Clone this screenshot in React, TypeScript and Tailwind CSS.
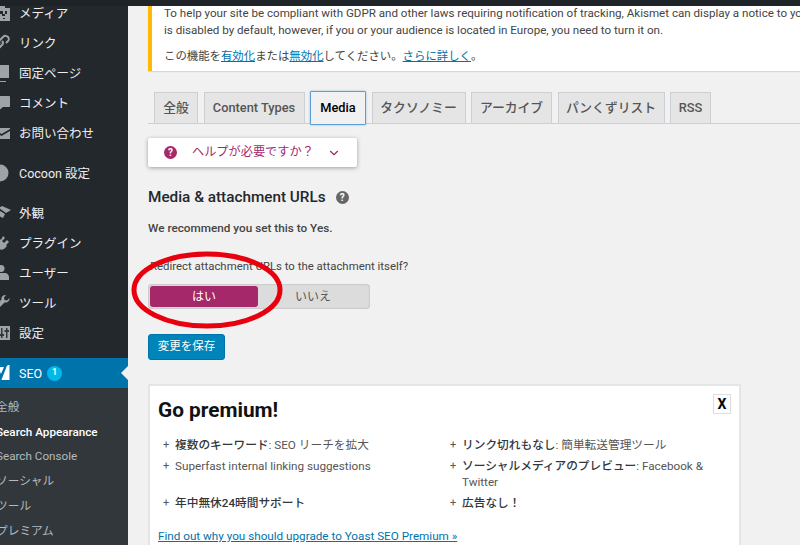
import { ChevronDown } from "lucide-react";
import type { ReactNode } from "react";

const iconClass = "w-5 h-5 -ml-[9px] shrink-0 fill-[#9ea3a8]";

const MediaIcon = () => (
    <svg viewBox="0 0 20 20" className={iconClass}>
        <path d="M9 2h5v3h5v6h-3V8h-2v3h-2V8H9z" />
        <path d="M9 11h2v2h3v-2h5v7H9zm3 4v1h2v-1z" />
        <path d="M1 5h7v12H1z" />
    </svg>
);
const LinkIcon = () => (
    <svg viewBox="0 0 20 20" className="w-5 h-5 -ml-[9px] shrink-0 fill-none stroke-[#9ea3a8] stroke-2">
        <path d="M9 11c-2-2-1-3 0-4l3-3c2-2 4-1 5 0s1 3 0 4l-2 2" />
        <path d="M11 8c2 2 1 3 0 4l-4 4c-2 2-4 1-5 0s-1-3 0-4l2-2" />
    </svg>
);
const PageIcon = () => (
    <svg viewBox="0 0 20 20" className={iconClass}>
        <path d="M5 2h13v13H5z" />
        <path d="M3 5v13h12v1H2V5z" />
    </svg>
);
const CommentIcon = () => (
    <svg viewBox="0 0 20 20" className={iconClass}>
        <path d="M3 3h15c.6 0 1 .4 1 1v9c0 .6-.4 1-1 1h-6l-5 4v-4H3z" />
    </svg>
);
const MailIcon = () => (
    <svg viewBox="0 0 20 20" className={iconClass}>
        <path d="M2 4h17v1l-8.5 5L2 5z" transform="translate(0 1)" />
        <path d="M2 8l8.500 5L19 8v8H2z" />
    </svg>
);
const CircleIcon = () => (
    <svg viewBox="0 0 20 20" className={iconClass}>
        <circle cx="9" cy="10" r="8.500" />
    </svg>
);
const BrushIcon = () => (
    <svg viewBox="0 0 20 20" className={iconClass}>
        <path d="M8 5l3-2 9 4-5 3z" />
        <path d="M6 6l8 5-2 4-4-2-6 3-2-2 4-5z" />
    </svg>
);
const PlugIcon = () => (
    <svg viewBox="0 0 20 20" className={iconClass}>
        <path d="M12 3l2 2-3 3 2 2 3-3 2 2-3 3 1 1-3 3c-2 1-4 1-5 0l-3 3-2-2 3-3c-1-1-1-3 0-5l3-3 1 1z" />
    </svg>
);
const UserIcon = () => (
    <svg viewBox="0 0 20 20" className={iconClass}>
        <circle cx="10" cy="5.500" r="3.500" />
        <path d="M2 17v-3c0-2 2-4 4-4h8c2 0 4 2 4 4v3z" />
    </svg>
);
const WrenchIcon = () => (
    <svg viewBox="0 0 20 20" className={iconClass}>
        <path d="M15 2c-3-.5-5 2-4.500 4.500L2 15c-1 1-1 2 0 3s2 1 3 0l8.500-8.500C16 10 19 8 18.500 5L16 7.500 13.500 7 13 4.500z" />
    </svg>
);
const SettingsIcon = () => (
    <svg viewBox="0 0 20 20" className="w-5 h-5 -ml-[9px] shrink-0">
        <path fill="#9ea3a8" d="M1 3h18v14H1z" />
        <path fill="#32373c" d="M5 5h1.500v3H8v2H6.500v5H5v-5H3.500V8H5zM10 5h1.500v6H13v2h-1.500v2H10v-2H8.500v-2H10zM15 5h1.500v2H18v2h-1.500v6H15V9h-1.500V7H15z" />
    </svg>
);
const YoastIcon = () => (
    <svg viewBox="0 0 20 20" className="w-5 h-5 -ml-[9px] shrink-0">
        <path fill="#ffffff" d="M2 4h13l2-2h1.500v15H7l-1 1-1-1h-1l-1-1z" />
        <path fill="#0073aa" d="M7.500 5.500L10 11l3-7h2.500L10 18H7.500l1-3L5 5.500z" />
    </svg>
);

const Row = ({ icon, label }: { icon: ReactNode; label: string }) => (
    <div className="h-[30px] flex items-center gap-2 text-[12.500px] text-[#eeeeee]">
        {icon}
        <span className="relative top-px">{label}</span>
    </div>
);

function Sidebar() {
    return (
        <aside className="w-[128px] shrink-0 bg-[#23282d] flex flex-col overflow-hidden">
            <div className="-mt-2">
                <Row icon={<MediaIcon />} label="メディア" />
                <Row icon={<LinkIcon />} label="リンク" />
                <Row icon={<PageIcon />} label="固定ページ" />
                <Row icon={<CommentIcon />} label="コメント" />
                <Row icon={<MailIcon />} label="お問い合わせ" />
            </div>
            <div className="mt-2.5">
                <Row icon={<CircleIcon />} label="Cocoon 設定" />
            </div>
            <div className="mt-2.5">
                <Row icon={<BrushIcon />} label="外観" />
                <Row icon={<PlugIcon />} label="プラグイン" />
                <Row icon={<UserIcon />} label="ユーザー" />
                <Row icon={<WrenchIcon />} label="ツール" />
                <Row icon={<SettingsIcon />} label="設定" />
            </div>
            <div className="mt-2.5 relative h-[30px] bg-[#0073aa] flex items-center gap-2 text-[12.500px] text-white">
                <YoastIcon />
                <span className="relative top-px">SEO</span>
                <span className="w-[15px] h-[15px] -ml-[3px] rounded-full bg-[#00b9eb] flex items-center justify-center text-[9px] font-semibold">1</span>
                <span className="absolute right-0 top-[8px] border-y-[7px] border-r-[7px] border-y-transparent border-r-[#f1f1f1]" />
            </div>
            <div className="flex-1 bg-[#32373c] pt-[7px] text-[11.700px] leading-[24.700px] text-[#b4b9be]">
                <div className="-ml-1">全般</div>
                <div className="-ml-1 font-medium text-white">Search Appearance</div>
                <div className="-ml-1">Search Console</div>
                <div className="-ml-1">ソーシャル</div>
                <div className="-ml-1">ツール</div>
                <div className="-ml-1">プレミアム</div>
            </div>
        </aside>
    );
}

const tabs = [
    { label: "全般", width: "w-[44px]" },
    { label: "Content Types", width: "w-[101px]" },
    { label: "Media", width: "w-[56px]", active: true },
    { label: "タクソノミー", width: "w-[94px]" },
    { label: "アーカイブ", width: "w-[81px]" },
    { label: "パンくずリスト", width: "w-[107px]" },
    { label: "RSS", width: "w-[41px]" },
];

function Tabs() {
    return (
        <div className="mt-[21px] h-[32px] pl-1.5 flex items-end gap-[5.500px] border-b border-[#ccd0d4]">
            {tabs.map((t) =>
                t.active ? (
                    <div
                        key={t.label}
                        className={`${t.width} h-[34px] -mb-[2px] flex items-center justify-center border border-[#5b9dd9] bg-[#f1f1f1] text-[12.800px] font-medium text-black rounded-[1px] shadow-[0_0_2px_rgba(30,140,190,0.5)]`}
                    >
                        {t.label}
                    </div>
                ) : (
                    <div
                        key={t.label}
                        className={`${t.width} h-[31px] flex items-center justify-center border border-b-0 border-[#ccd0d4] bg-[#e5e5e5] text-[12.800px] font-medium text-[#555555]`}
                    >
                        {t.label}
                    </div>
                )
            )}
        </div>
    );
}

const Plus = () => <span className="w-[12px] shrink-0 text-[#555555] text-[11px]">+</span>;

const Feature = ({ bold, rest }: { bold?: string; rest?: string }) => (
    <div className="flex pl-[5px] leading-[16.500px]">
        <Plus />
        <span>
            {bold && <b className="font-medium text-[#32373c]">{bold}</b>}
            {rest}
        </span>
    </div>
);

function Premium() {
    return (
        <div className="relative mt-[24px] w-[593px] flex-1 border-2 border-b-0 border-[#e5e5e5] bg-white pl-2 pr-2.5 pt-[10px] text-[11.700px] text-[#555555]">
            <div className="absolute right-2 top-2 w-[18px] h-[20px] border border-[#dddddd] flex items-center justify-center text-[14px] font-bold text-black">X</div>
            <h2 className="text-[20.800px] leading-[28px] font-bold text-[#111111]">Go premium!</h2>
            <div className="mt-[13px] grid grid-cols-[287px_262px] gap-y-[4px]">
                <Feature bold="複数のキーワード" rest=": SEO リーチを拡大" />
                <Feature bold="リンク切れもなし" rest=": 簡単転送管理ツール" />
                <Feature rest="Superfast internal linking suggestions" />
                <Feature bold="ソーシャルメディアのプレビュー" rest=": Facebook & Twitter" />
                <Feature bold="年中無休24時間サポート" />
                <Feature bold="広告なし！" />
            </div>
            <a className="block mt-[16px] text-[#0073aa] underline leading-[18px]">Find out why you should upgrade to Yoast SEO Premium »</a>
        </div>
    );
}

export default function App() {
    return (
        <div className="relative w-[800px] h-[545px] overflow-hidden flex flex-col bg-[#f1f1f1] font-['Roboto','Noto_Sans_CJK_JP',sans-serif]">
            <div className="h-1.5 shrink-0 bg-[#1d2327] relative z-10" />
            <div className="flex flex-1 min-h-0">
                <Sidebar />
                <main className="flex-1 min-w-0 pl-5 flex flex-col overflow-hidden">
                    <div className="h-[65px] shrink-0 -mr-10 border-l-4 border-[#ffb900] bg-white pl-3 text-[11.600px] leading-[16.500px] text-[#444444] shadow-[0_1px_1px_rgba(0,0,0,0.1)] whitespace-nowrap">
                        <p className="-mt-px">To help your site be compliant with GDPR and other laws requiring notification of tracking, Akismet can display a notice to you</p>
                        <p>is disabled by default, however, if you or your audience is located in Europe, you need to turn it on.</p>
                        <p className="mt-[10px] text-[11.400px]">
                            この機能を<a className="text-[#0073aa] underline">有効化</a>または<a className="text-[#0073aa] underline">無効化</a>してください。<a className="text-[#0073aa] underline">さらに詳しく</a>。
                        </p>
                    </div>
                    <Tabs />
                    <div className="mt-[14px] w-[209px] h-[29px] shrink-0 bg-white rounded-[2px] shadow-[0_1px_4px_rgba(0,0,0,0.35)] flex items-center pl-4 text-[12.200px] text-[#a4286a]">
                        <span className="w-[13px] h-[13px] rounded-full bg-[#a4286a] text-white text-[10px] font-bold flex items-center justify-center">?</span>
                        <span className="ml-[15px]">ヘルプが必要ですか？</span>
                        <ChevronDown className="w-3.5 h-3.5 ml-[13px]" strokeWidth={2} />
                    </div>
                    <div className="mt-[20px] flex items-center h-[20px]">
                        <h2 className="text-[15.300px] font-medium text-[#23282d]">Media &amp; attachment URLs</h2>
                        <span className="ml-[10px] w-[13px] h-[13px] rounded-full bg-[#666666] text-white text-[10px] font-bold flex items-center justify-center">?</span>
                    </div>
                    <p className="mt-[12px] text-[11.750px] leading-[18px] font-medium text-[#444444]">We recommend you set this to Yes.</p>
                    <p className="mt-[20px] ml-0.5 text-[11.400px] leading-[18px] text-[#444444]">Redirect attachment URLs to the attachment itself?</p>
                    <div className="mt-[9px] w-[222px] h-[25px] shrink-0 rounded-[4px] bg-[#dcdcdc] p-0.5 flex items-center text-[12px] shadow-[inset_0_0_2px_rgba(0,0,0,0.25)]">
                        <span className="w-[108px] h-[21px] rounded-[3px] bg-[#a4286a] text-white flex items-center justify-center">はい</span>
                        <span className="flex-1 text-center text-[#555555]">いいえ</span>
                    </div>
                    <button className="mt-[25px] w-[77px] h-[26px] shrink-0 rounded-[3px] bg-[#0085ba] border border-[#0073aa] text-white text-[11.500px] flex items-center justify-center">変更を保存</button>
                    <Premium />
                </main>
            </div>
            <svg viewBox="0 0 152 78" className="absolute left-[131px] top-[251px] w-[152px] h-[78px] fill-none stroke-[#e8000f] stroke-[5px]">
                <ellipse cx="76" cy="39" rx="73" ry="36" />
            </svg>
        </div>
    );
}
